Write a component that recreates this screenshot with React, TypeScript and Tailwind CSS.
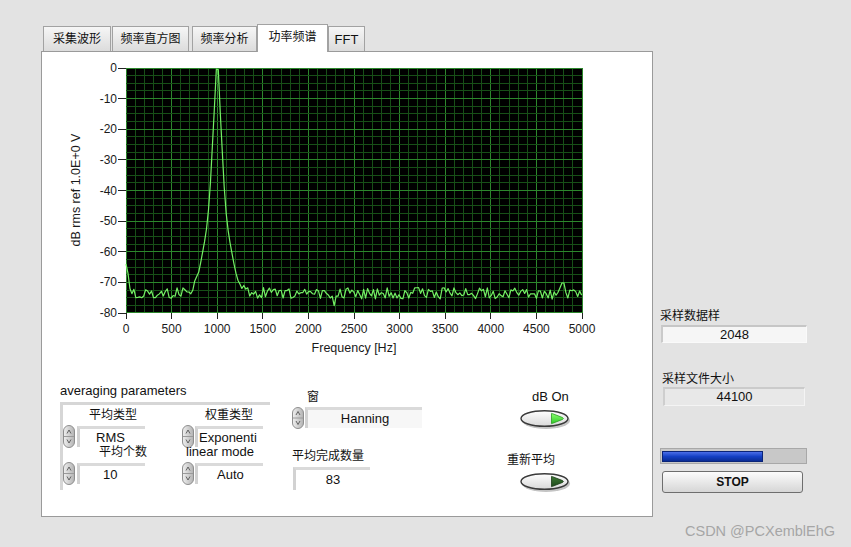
import React from 'react';

// --- spectrum data -------------------------------------------------------
const DF = 44100 / 2048;
const PX_HZ = 456 / 5000;
const PX_DB = 245 / 80;
const PLOT_X = 84;
const PLOT_Y = 16;

const PEAK: [number, number][] = [
  [0, 0], [12, -0.5], [25, -10], [44, -20], [60, -30], [79, -40], [105, -50],
  [134, -56], [170, -62], [200, -67], [230, -71], [300, -80], [600, -110],
];

function mulberry32(a: number) {
  return function () {
    a |= 0;
    a = (a + 0x6d2b79f5) | 0;
    let t = Math.imul(a ^ (a >>> 15), 1 | a);
    t = (t + Math.imul(t ^ (t >>> 7), 61 | t)) ^ t;
    return ((t ^ (t >>> 14)) >>> 0) / 4294967296;
  };
}

function peakDb(d: number) {
  d = Math.abs(d);
  for (let k = 1; k < PEAK.length; k++) {
    if (d <= PEAK[k][0]) {
      const [x0, y0] = PEAK[k - 1];
      const [x1, y1] = PEAK[k];
      return y0 + ((y1 - y0) * (d - x0)) / (x1 - x0);
    }
  }
  return -120;
}

const DC = [-64, -67, -72];

function buildTrace() {
  const rnd = mulberry32(20480);
  const pts: string[] = [];
  for (let i = 0; i * DF <= 5000.5; i++) {
    const f = i * DF;
    let noise = -73.6 + (rnd() - 0.5) * 3.8;
    if (Math.abs(f - 4790) < 12) noise = -70.2;
    if (Math.abs(f - 2275) < 12) noise = -77.6;
    const p = peakDb(f - 1000);
    let db = 10 * Math.log10(Math.pow(10, noise / 10) + Math.pow(10, p / 10));
    if (i < DC.length) db = DC[i];
    db = Math.min(db, 0);
    const x = PLOT_X + Math.min(f, 5000) * PX_HZ;
    const y = PLOT_Y - db * PX_DB;
    pts.push(`${x.toFixed(2)},${y.toFixed(2)}`);
  }
  return pts.join(' ');
}

const TRACE = buildTrace();

function Chart() {
  const vMinor = Array.from({ length: 51 }, (_, k) => k);
  const hMinor = Array.from({ length: 33 }, (_, k) => k);
  const xTicks = [0, 500, 1000, 1500, 2000, 2500, 3000, 3500, 4000, 4500, 5000];
  const yTicks = [0, -10, -20, -30, -40, -50, -60, -70, -80];
  return (
    <svg width="610" height="331" viewBox="0 0 610 331" className="shrink-0">
      <rect x={PLOT_X} y={PLOT_Y} width="456" height="245" fill="#000" />
      <g shapeRendering="crispEdges" strokeWidth="1">
        {vMinor.map((k) => (
          <line
            key={'vx' + k}
            x1={PLOT_X + k * 9.12}
            x2={PLOT_X + k * 9.12}
            y1={PLOT_Y}
            y2={PLOT_Y + 245}
            stroke={k % 5 === 0 ? '#2c872c' : '#174f17'}
          />
        ))}
        {hMinor.map((k) => (
          <line
            key={'hy' + k}
            x1={PLOT_X}
            x2={PLOT_X + 456}
            y1={PLOT_Y + k * 7.656}
            y2={PLOT_Y + k * 7.656}
            stroke={k % 4 === 0 ? '#2c872c' : '#174f17'}
          />
        ))}
        {xTicks.map((t) => (
          <line
            key={'xt' + t}
            x1={PLOT_X + t * PX_HZ}
            x2={PLOT_X + t * PX_HZ}
            y1={261}
            y2={267}
            stroke="#222"
          />
        ))}
        {yTicks.map((t) => (
          <line
            key={'yt' + t}
            x1={76}
            x2={84}
            y1={PLOT_Y - t * PX_DB}
            y2={PLOT_Y - t * PX_DB}
            stroke="#222"
          />
        ))}
      </g>
      <polyline points={TRACE} fill="none" stroke="#74f064" strokeWidth="1.2" strokeLinejoin="round" />
      <g fontFamily="Liberation Sans, sans-serif" fontSize="12" fill="#1a1a1a">
        {xTicks.map((t) => (
          <text key={'xl' + t} x={PLOT_X + t * PX_HZ} y={281} textAnchor="middle">
            {t}
          </text>
        ))}
        {yTicks.map((t) => (
          <text key={'yl' + t} x={75} y={PLOT_Y - t * PX_DB + 4} textAnchor="end">
            {t}
          </text>
        ))}
        <text x={312} y={300} textAnchor="middle" fontSize="12.5">
          Frequency [Hz]
        </text>
        <text x={38} y={138} textAnchor="middle" fontSize="12.5" transform="rotate(-90 38 138)">
          dB rms ref 1.0E+0 V
        </text>
      </g>
    </svg>
  );
}

// --- controls --------------------------------------------------------------
function Spin({ h = 23 }: { h?: number }) {
  const mid = h / 2;
  return (
    <svg width="12" height={h} viewBox={`0 0 12 ${h}`} className="shrink-0">
      <defs>
        <linearGradient id="spinGrad" x1="0" x2="1">
          <stop offset="0" stopColor="#f0f0f0" />
          <stop offset="1" stopColor="#b2b2b2" />
        </linearGradient>
      </defs>
      <rect x="0.5" y="0.5" width="11" height={h - 1} rx="5.5" fill="url(#spinGrad)" stroke="#8e8e8e" />
      <line x1="1" y1={mid} x2="11" y2={mid} stroke="#9a9a9a" />
      <path d={`M4 ${mid - 3} L6 ${mid - 6.5} L8 ${mid - 3}`} fill="none" stroke="#555" strokeWidth="0.9" />
      <path d={`M4 ${mid + 3} L6 ${mid + 6.5} L8 ${mid + 3}`} fill="none" stroke="#555" strokeWidth="0.9" />
    </svg>
  );
}

function Ring({ value, width, pad, gap = 2 }: { value: string; width: number; pad: string; gap?: number }) {
  return (
    <div className="flex items-center h-[23px]">
      <Spin />
      <div
        className={`${gap === 2 ? 'ml-[2px]' : 'ml-px'} ${pad} h-[21px] border-t-[3px] border-l-[3px] border-t-[#dadada] border-l-[#d2d2d2] bg-white text-[13px] leading-[17px] whitespace-nowrap overflow-hidden`}
        style={{ width }}
      >
        {value}
      </div>
    </div>
  );
}

function BoolButton({ on }: { on: boolean }) {
  return (
    <svg width="52" height="21" viewBox="0 0 52 21">
      <defs>
        <linearGradient id="btnGrad" x1="0" y1="0" x2="0" y2="1">
          <stop offset="0" stopColor="#ffffff" />
          <stop offset="1" stopColor="#d8d8d8" />
        </linearGradient>
        <linearGradient id="ledOn" x1="0" y1="0" x2="0" y2="1">
          <stop offset="0" stopColor="#8cff70" />
          <stop offset="1" stopColor="#2fc828" />
        </linearGradient>
        <linearGradient id="ledOff" x1="0" y1="0" x2="0" y2="1">
          <stop offset="0" stopColor="#3f7a36" />
          <stop offset="1" stopColor="#1f4a1c" />
        </linearGradient>
      </defs>
      <ellipse cx="26" cy="10.5" rx="24" ry="8.5" fill="#8a8a8a" opacity="0.5" />
      <ellipse cx="24.5" cy="8.5" rx="23.5" ry="7.8" fill="url(#btnGrad)" stroke="#3a3a3a" strokeWidth="1.4" />
      <path
        d="M31.5 3.6 Q31 3 32.6 3.7 L42.6 7.6 Q44.2 8.5 42.6 9.4 L32.6 13.3 Q31 14 31.5 13.4 Z"
        fill={on ? 'url(#ledOn)' : 'url(#ledOff)'}
        stroke={on ? '#2a9a22' : '#1a3a18'}
        strokeWidth="0.8"
        strokeLinejoin="round"
      />
    </svg>
  );
}

function Tab({ label, w, active, cls = '' }: { label: string; w: string; active?: boolean; cls?: string }) {
  if (active) {
    return (
      <div
        className={`${w} ${cls} h-[28px] -mb-px relative z-10 bg-white border border-b-0 border-[#a2a2a2] flex items-center justify-center pb-[4px] text-[12px]`}
      >
        {label}
      </div>
    );
  }
  return (
    <div
      className={`${w} ${cls} h-[25px] border border-b-0 border-[#a2a2a2] bg-gradient-to-b from-[#f6f6f6] to-[#dcdcdc] flex items-center justify-center text-[12px]`}
    >
      {label}
    </div>
  );
}

function AveragingCluster() {
  return (
    <div className="ml-[18px] w-[210px] flex flex-col">
      <div className="h-[16px] leading-[16px] text-[13px] whitespace-nowrap">averaging parameters</div>
      <div className="mt-[3px] w-[210px] h-[88px] border-t-[3px] border-l-[3px] border-[#d6d6d6] flex">
        <div className="w-[84px] flex flex-col">
          <div className="mt-[2px] h-[16px] leading-[16px] text-right pr-[10px] text-[12px]">平均类型</div>
          <div className="mt-[2px]">
            <Ring value="RMS" width={68} pad="pl-[16px]" />
          </div>
          <div className="-mt-[3px] h-[14px] leading-[14px] text-right text-[12px] relative">平均个数</div>
          <div className="mt-[3px]">
            <Ring value="10" width={68} pad="pl-[23px]" />
          </div>
        </div>
        <div className="ml-[35px] w-[81px] flex flex-col">
          <div className="mt-[2px] h-[16px] leading-[16px] text-right pr-[10px] text-[12px]">权重类型</div>
          <div className="mt-[2px]">
            <Ring value="Exponenti" width={69} pad="pl-[1px]" gap={1} />
          </div>
          <div className="-mt-[3px] h-[14px] leading-[14px] pl-[4px] text-[13px] whitespace-nowrap relative">linear mode</div>
          <div className="mt-[3px]">
            <Ring value="Auto" width={69} pad="pl-[19px]" gap={1} />
          </div>
        </div>
      </div>
    </div>
  );
}

function WindowColumn() {
  return (
    <div className="ml-[22px] w-[130px] flex flex-col">
      <div className="mt-[6px] h-[16px] leading-[16px] pl-[15px] text-[12px]">窗</div>
      <div className="mt-[2px] flex items-center h-[21px]">
        <Spin h={22} />
        <div className="ml-px w-[117px] h-[21px] border-t-[3px] border-l-[3px] border-t-[#dadada] border-l-[#d2d2d2] bg-[#f7f7f7] text-center text-[13px] leading-[17px]">
          Hanning
        </div>
      </div>
      <div className="mt-[20px] h-[16px] leading-[16px] text-[12px] whitespace-nowrap">平均完成数量</div>
      <div className="mt-[3px] ml-px w-[77px] h-[23px] border-t-[3px] border-l-[3px] border-t-[#dadada] border-l-[#d2d2d2] bg-white text-center text-[13px] leading-[19px]">
        83
      </div>
    </div>
  );
}

function ButtonColumn() {
  return (
    <div className="ml-[85px] w-[63px] flex flex-col">
      <div className="mt-[6px] h-[16px] leading-[16px] pl-[25px] text-[13px] whitespace-nowrap">dB On</div>
      <div className="mt-[5px] ml-[13px] h-[18px]">
        <BoolButton on />
      </div>
      <div className="mt-[24px] h-[16px] leading-[16px] text-[12px] whitespace-nowrap">重新平均</div>
      <div className="mt-[5px] ml-[13px] h-[18px]">
        <BoolButton on={false} />
      </div>
    </div>
  );
}

function SidePanel() {
  return (
    <div className="ml-[7px] w-[147px] flex flex-col">
      <div className="mt-[284px] h-[16px] leading-[16px] text-[12px]">采样数据样</div>
      <div className="mt-px ml-px w-[146px] h-[18px] border-t-2 border-l-2 border-t-[#c6c6c6] border-l-[#cacaca] border-r border-b border-r-[#fafafa] border-b-[#fafafa] bg-[#f6f6f6] text-center text-[13px] leading-[15px]">
        2048
      </div>
      <div className="mt-[28px] ml-[2px] h-[16px] leading-[16px] text-[12px]">采样文件大小</div>
      <div className="ml-[3px] w-[142px] h-[19px] border-t-2 border-l-2 border-t-[#cbcbcb] border-l-[#cecece] border-r border-b border-r-[#f4f4f4] border-b-[#f4f4f4] bg-[#e8e8e8] text-center text-[13px] leading-[16px]">
        44100
      </div>
      <div className="mt-[42px] w-[147px] h-[16px] border border-[#a8a8a8] bg-[#c8c8c8] flex items-center px-px">
        <div className="w-[101px] h-[11px] border border-[#0a2478] bg-gradient-to-b from-[#4a6ee8] via-[#1440c4] to-[#0a2c94]" />
      </div>
      <div className="mt-[7px] ml-[2px] w-[141px] h-[22px] rounded-[3px] border border-[#6e6e6e] bg-gradient-to-b from-[#fcfcfc] to-[#d6d6d6] flex items-center justify-center text-[12px] font-bold">
        STOP
      </div>
      <div className="mt-[31px] ml-[25px] h-[14px] leading-[14px] text-[14.5px] text-[#a6a6a6] whitespace-nowrap">
        CSDN @PCXemblEhG
      </div>
    </div>
  );
}

export default function App() {
  return (
    <div className="w-[851px] h-[547px] overflow-hidden bg-[#e3e3e3] text-[#111] flex pt-[24px] font-['Liberation_Sans','Noto_Sans_CJK_SC',sans-serif]">
      <div className="ml-[41px] w-[612px] flex flex-col">
        <div className="h-[27px] flex items-end pl-[2px]">
          <Tab label="采集波形" w="w-[68px]" />
          <Tab label="频率直方图" w="w-[77px]" cls="ml-px" />
          <Tab label="频率分析" w="w-[65px]" cls="ml-[3px]" />
          <Tab label="功率频谱" w="w-[71px]" active />
          <Tab label="FFT" w="w-[37px]" cls="text-[13px] pt-[2px]" />
        </div>
        <div className="h-[466px] border border-[#9a9a9a] bg-white flex flex-col">
          <Chart />
          <div className="flex">
            <AveragingCluster />
            <WindowColumn />
            <ButtonColumn />
          </div>
        </div>
      </div>
      <SidePanel />
    </div>
  );
}
